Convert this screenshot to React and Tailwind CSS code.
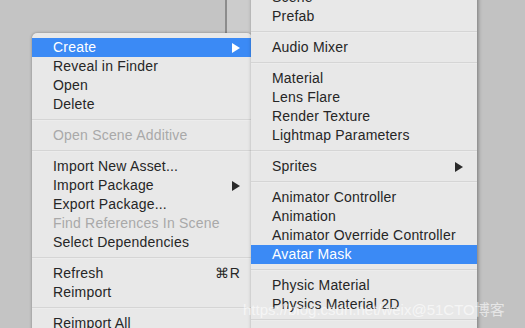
import React from 'react';

const leftItems = [
  { label: 'Create', active: true, arrow: true },
  { label: 'Reveal in Finder' },
  { label: 'Open' },
  { label: 'Delete' },
  { sep: true },
  { label: 'Open Scene Additive', disabled: true },
  { sep: true },
  { label: 'Import New Asset...' },
  { label: 'Import Package', arrow: true },
  { label: 'Export Package...' },
  { label: 'Find References In Scene', disabled: true },
  { label: 'Select Dependencies' },
  { sep: true },
  { label: 'Refresh', shortcut: '⌘R' },
  { label: 'Reimport' },
  { sep: true },
  { label: 'Reimport All' },
];

const subItems = [
  { label: 'Scene' },
  { label: 'Prefab' },
  { sep: true },
  { label: 'Audio Mixer' },
  { sep: true },
  { label: 'Material' },
  { label: 'Lens Flare' },
  { label: 'Render Texture' },
  { label: 'Lightmap Parameters' },
  { sep: true },
  { label: 'Sprites', arrow: true },
  { sep: true },
  { label: 'Animator Controller' },
  { label: 'Animation' },
  { label: 'Animator Override Controller' },
  { label: 'Avatar Mask', active: true },
  { sep: true },
  { label: 'Physic Material' },
  { label: 'Physics Material 2D' },
  { sep: true },
];

const Arrow = ({ active }) => (
  <svg width="8" height="10" viewBox="0 0 8 10" className={active ? 'fill-white' : 'fill-[#2a2a2a]'}>
    <path d="M0 0 L8 5 L0 10 Z" />
  </svg>
);

const MenuList = ({ items, padLeft, padRight }) => (
  <div className="flex flex-col">
    {items.map((it, i) =>
      it.sep ? (
        <div key={i} className="h-[12px] flex flex-col justify-center">
          <div className="h-[2px] bg-[#d5d5d5] border-b border-[#ececec]" />
        </div>
      ) : (
        <div
          key={i}
          className={`h-[19px] flex items-center justify-between ${padLeft} ${padRight} ${
            it.active ? 'bg-[#3b8af5] text-white' : it.disabled ? 'text-[#a9a9a9]' : 'text-[#262626]'
          }`}
        >
          <span>{it.label}</span>
          {it.arrow && <Arrow active={it.active} />}
          {it.shortcut && <span>{it.shortcut}</span>}
        </div>
      )
    )}
  </div>
);

const App = () => {
  return (
    <div
      className="relative w-[525px] h-[328px] overflow-hidden bg-[#c2c2c2] text-[14px] leading-[19px] tracking-[0.2px]"
      style={{ fontFamily: '"Liberation Sans", Arial, sans-serif' }}
    >
      {/* background window behind the menus */}
      <div className="flex h-full">
        <div className="w-[225px] h-full bg-[#c4c4c4]" />
        <div className="w-[2px] h-full bg-[#8c8c8c]" />
        <div className="w-[24px] h-full bg-[#cccccc]" />
        <div className="flex-1 h-full bg-[#c2c2c2]" />
      </div>

      {/* main context menu */}
      <div className="absolute left-[32px] top-[33px] w-[220px] pt-[5px] bg-[#e8e8e8] rounded-tl-[5px] rounded-tr-[5px] shadow-[0_0_3px_rgba(0,0,0,0.35)]">
        <MenuList items={leftItems} padLeft="pl-[21px]" padRight="pr-[12px]" />
      </div>

      {/* create submenu */}
      <div className="absolute left-[251px] top-[-12px] w-[226px] h-[360px] bg-[#e8e8e8] shadow-[1px_0_4px_rgba(0,0,0,0.4)]">
        <MenuList items={subItems} padLeft="pl-[21px]" padRight="pr-[14px]" />
      </div>

      {/* watermark */}
      <div
        className="absolute left-[243px] top-[300px] text-[15px] leading-[20px] tracking-normal text-white/60 whitespace-nowrap"
        style={{ fontFamily: '"Liberation Sans", "Noto Sans CJK SC", sans-serif' }}
      >
        https://blog.csdn.net/weix@51CTO博客
      </div>
    </div>
  );
};

export default App;
